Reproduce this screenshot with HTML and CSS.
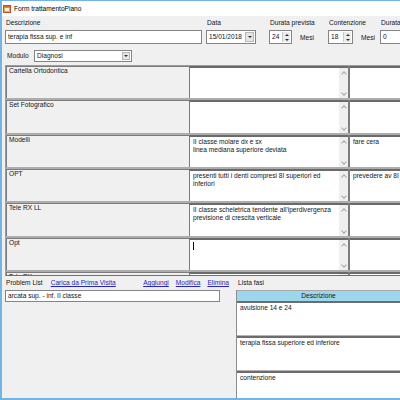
FILE: index.html
```html
<!DOCTYPE html>
<html>

<head>
	<title>Form trattamentoPiano</title>
	<link rel="stylesheet" href="styles.css">
</head>

<body>
	<div class="window">
		<div class="titlebar">
			<svg class="appicon" width="8" height="8" viewBox="0 0 8 8">
				<rect x="0.5" y="0.5" width="7" height="7" fill="#f2a93b" stroke="#c4502a" />
				<rect x="2" y="3" width="4" height="3" fill="#fff4d8" />
				<rect x="1" y="1" width="6" height="1.5" fill="#d9642c" />
			</svg>
			<span>Form trattamentoPiano</span>
		</div>

		<div class="client">
			<div class="toprow">
				<div class="field f-desc">
					<label>Descrizione</label>
					<div class="textbox">terapia fissa sup. e inf</div>
				</div>
				<div class="field f-data">
					<label>Data</label>
					<div class="combo">
						<span class="combo-text">15/01/2018</span>
						<span class="dropbtn"><i class="tri-down"></i></span>
					</div>
				</div>
				<div class="field f-durata">
					<label>Durata prevista</label>
					<div class="spinrow">
						<div class="spin spin-24">
							<span class="spin-text">24</span>
							<span class="spinbtn"><i class="tri-up"></i><i class="tri-down"></i></span>
						</div>
						<span class="unit">Mesi</span>
					</div>
				</div>
				<div class="field f-cont">
					<label>Contenzione</label>
					<div class="spinrow">
						<div class="spin spin-18">
							<span class="spin-text">18</span>
							<span class="spinbtn"><i class="tri-up"></i><i class="tri-down"></i></span>
						</div>
						<span class="unit">Mesi</span>
					</div>
				</div>
				<div class="field f-dur2">
					<label>Durata</label>
					<div class="spinrow">
						<div class="spin spin-0">
							<span class="spin-text">0</span>
							<span class="spinbtn"><i class="tri-up"></i><i class="tri-down"></i></span>
						</div>
					</div>
				</div>
			</div>

			<div class="modulo">
				<label>Modulo</label>
				<div class="combo combo-modulo">
					<span class="combo-text">Diagnosi</span>
					<span class="dropbtn"><i class="tri-down"></i></span>
				</div>
			</div>

			<div class="grid">
				<div class="grow">
					<div class="gl">Cartella Ortodontica</div>
					<div class="gm"></div>
					<div class="sb"></div>
					<div class="dv"></div>
					<div class="gr"></div>
				</div>
				<div class="grow">
					<div class="gl">Set Fotografico</div>
					<div class="gm"></div>
					<div class="sb"></div>
					<div class="dv"></div>
					<div class="gr"></div>
				</div>
				<div class="grow">
					<div class="gl">Modelli</div>
					<div class="gm">II classe molare dx e sx<br>linea mediana superiore deviata</div>
					<div class="sb"></div>
					<div class="dv"></div>
					<div class="gr">fare cera</div>
				</div>
				<div class="grow">
					<div class="gl">OPT</div>
					<div class="gm">presenti tutti i denti compresi 8I superiori ed<br>inferiori</div>
					<div class="sb"></div>
					<div class="dv"></div>
					<div class="gr">prevedere av 8I inferiori</div>
				</div>
				<div class="grow">
					<div class="gl">Tele RX LL</div>
					<div class="gm">II classe scheletrica tendente all'iperdivergenza<br>previsione di crescita verticale</div>
					<div class="sb"></div>
					<div class="dv"></div>
					<div class="gr"></div>
				</div>
				<div class="grow">
					<div class="gl">Opt</div>
					<div class="gm"><span class="caret"></span></div>
					<div class="sb"></div>
					<div class="dv"></div>
					<div class="gr"></div>
				</div>
				<div class="grow">
					<div class="gl">Tele RX</div>
					<div class="gm"></div>
					<div class="sb"></div>
					<div class="dv"></div>
					<div class="gr"></div>
				</div>
			</div>

			<div class="bottom">
				<div class="left">
					<div class="pl-head">
						<span class="pl-title">Problem List</span>
						<a class="link link-carica" href="#">Carica da Prima Visita</a>
						<div class="actions">
							<a class="link" href="#">Aggiungi</a>
							<a class="link" href="#">Modifica</a>
							<a class="link" href="#">Elimina</a>
						</div>
					</div>
					<div class="listbox">arcata sup. - inf. II classe</div>
				</div>
				<div class="right">
					<label class="fasi-title">Lista fasi</label>
					<div class="phases">
						<div class="ph-head">Descrizione</div>
						<div class="ph-row">avulsione 14 e 24</div>
						<div class="ph-row">terapia fissa superiore ed inferiore</div>
						<div class="ph-row">contenzione</div>
					</div>
				</div>
			</div>
		</div>
	</div>
</body>

</html>
```

FILE: styles.css
```css
* {
	box-sizing: border-box;
}

body {
	margin: 0;
	padding: 0;
	font-family: "Liberation Sans", Arial, sans-serif;
	font-size: 6.6px;
	color: #141414;
	background-color: #f0f0f0;
}

.window {
	width: 400px;
	height: 400px;
	overflow: hidden;
	display: flex;
	flex-direction: column;
	border-left: 2px solid #72b4e6;
	border-top: 1px solid #72b4e6;
	border-bottom: 2px solid #72b4e6;
}

.titlebar {
	height: 15px;
	flex: none;
	display: flex;
	align-items: center;
	gap: 3px;
	padding-left: 1px;
	background-color: #fff;
	color: #000;
	white-space: nowrap;
}

.appicon {
	display: block;
}

.client {
	flex: 1;
	min-height: 0;
	display: flex;
	flex-direction: column;
	padding: 3px 0 0 3px;
}

label {
	display: block;
	height: 8px;
	line-height: 8px;
	padding-left: 1px;
	white-space: nowrap;
}

/* top fields */

.toprow {
	display: flex;
	flex: none;
	white-space: nowrap;
}

.field {
	flex: none;
}

.f-desc {
	width: 197px;
}

.f-data {
	width: 50px;
	margin-left: 4px;
}

.f-durata {
	width: 59px;
	margin-left: 13px;
}

.f-cont {
	width: 52px;
}

.f-dur2 {
	width: 40px;
}

.textbox {
	margin-top: 3px;
	height: 14px;
	line-height: 12px;
	padding-left: 2px;
	background-color: #fff;
	border: 1px solid #848484;
}

.combo {
	display: flex;
	margin-top: 3px;
	height: 14px;
	background-color: #fff;
	border: 1px solid #848484;
}

.combo-text {
	flex: 1;
	line-height: 12px;
	padding-left: 2px;
}

.dropbtn {
	width: 9px;
	display: flex;
	align-items: center;
	justify-content: center;
	margin: 1px;
	background-color: #e5e5e5;
	border: 1px solid #b9b9b9;
}

.tri-down {
	width: 0;
	height: 0;
	border-left: 2px solid transparent;
	border-right: 2px solid transparent;
	border-top: 2px solid #333;
}

.tri-up {
	width: 0;
	height: 0;
	border-left: 2px solid transparent;
	border-right: 2px solid transparent;
	border-bottom: 2px solid #333;
}

.spinrow {
	display: flex;
	align-items: center;
	margin-top: 3px;
}

.spin {
	display: flex;
	height: 14px;
	background-color: #fff;
	border: 1px solid #848484;
}

.spin-24 {
	width: 23px;
}

.spin-18 {
	width: 25px;
}

.spin-0 {
	width: 30px;
}

.spin-text {
	flex: 1;
	line-height: 12px;
	padding-left: 2px;
}

.spinbtn {
	width: 8px;
	display: flex;
	flex-direction: column;
	align-items: center;
	justify-content: space-around;
	margin: 1px 1px 1px 0;
	background-color: #ececec;
	border-left: 1px solid #c9c9c9;
}

.unit {
	margin-left: 8px;
}

/* modulo */

.modulo {
	display: flex;
	flex: none;
	align-items: center;
	margin-top: 6px;
	height: 12px;
}

.modulo label {
	width: 29px;
	padding-left: 2px;
}

.combo-modulo {
	width: 98px;
	height: 12px;
	margin-top: 0;
}

.combo-modulo .combo-text {
	line-height: 10px;
}

.combo-modulo .dropbtn {
	width: 8px;
}

/* grid of exams */

.grid {
	flex: none;
	height: 211px;
	margin-top: 3px;
	overflow: hidden;
	border-top: 1px solid #9c9c9c;
	border-left: 1px solid #9c9c9c;
	border-bottom: 1px solid #6e6e6e;
}

.grow {
	display: flex;
	height: 34.33px;
	border-bottom: 2px solid #adadad;
}

.gl {
	flex: none;
	width: 183px;
	padding: 0 2px;
	line-height: 8px;
	border-top: 1px solid #7c7c7c;
	border-left: 1px solid #7c7c7c;
}

.gm {
	flex: none;
	width: 150px;
	padding: 1px 3px;
	line-height: 8px;
	background-color: #fff;
	border-top: 2px solid #6a6a6a;
	border-left: 1px solid #7c7c7c;
}

.sb {
	flex: none;
	width: 9px;
	display: flex;
	flex-direction: column;
	justify-content: space-between;
	align-items: center;
	padding: 4px 0 3px;
	background-color: #efefef;
	border-top: 2px solid #6a6a6a;
}

.sb::before,
.sb::after {
	content: '';
	width: 3px;
	height: 3px;
	border: 0 solid #a6a6a6;
	transform: rotate(45deg);
}

.sb::before {
	border-left-width: 1px;
	border-top-width: 1px;
}

.sb::after {
	border-right-width: 1px;
	border-bottom-width: 1px;
}

.dv {
	flex: none;
	width: 2px;
	background-color: #7c7c7c;
}

.gr {
	flex: none;
	width: 150px;
	padding: 1px 3px;
	line-height: 8px;
	background-color: #fff;
	border-top: 2px solid #6a6a6a;
}

.caret {
	display: inline-block;
	width: 1px;
	height: 8px;
	margin-top: 1px;
	background-color: #000;
	vertical-align: top;
}

/* bottom part */

.bottom {
	flex: 1;
	min-height: 0;
	display: flex;
	margin-top: 3px;
}

.left {
	flex: none;
	width: 224px;
}

.pl-head {
	display: flex;
	height: 8px;
	line-height: 8px;
	white-space: nowrap;
}

.pl-title {
	padding-left: 1px;
}

.link {
	color: #2424c6;
	text-decoration: underline;
}

.link-carica {
	margin-left: 8px;
}

.actions {
	display: flex;
	gap: 7px;
	margin-left: auto;
}

.listbox {
	margin-top: 3px;
	width: 215px;
	height: 12px;
	line-height: 10px;
	padding-left: 2px;
	background-color: #fff;
	border: 1px solid #848484;
	white-space: nowrap;
}

.right {
	flex: 1;
	min-width: 0;
	display: flex;
	flex-direction: column;
	margin-left: 7px;
}

.fasi-title {
	padding-left: 2px;
}

.phases {
	flex: 1;
	min-height: 0;
	overflow: hidden;
	margin-top: 3px;
	border-left: 1px solid #8c8c8c;
}

.ph-head {
	height: 11px;
	line-height: 10px;
	text-align: center;
	background-color: #9dd7eb;
	border-top: 1px solid #a8a8a8;
}

.ph-row {
	height: 35px;
	padding: 1px 3px;
	line-height: 8px;
	background-color: #fff;
	border-top: 2px solid #6c6c6c;
	border-bottom: 1px solid #b4b4b4;
}
```
